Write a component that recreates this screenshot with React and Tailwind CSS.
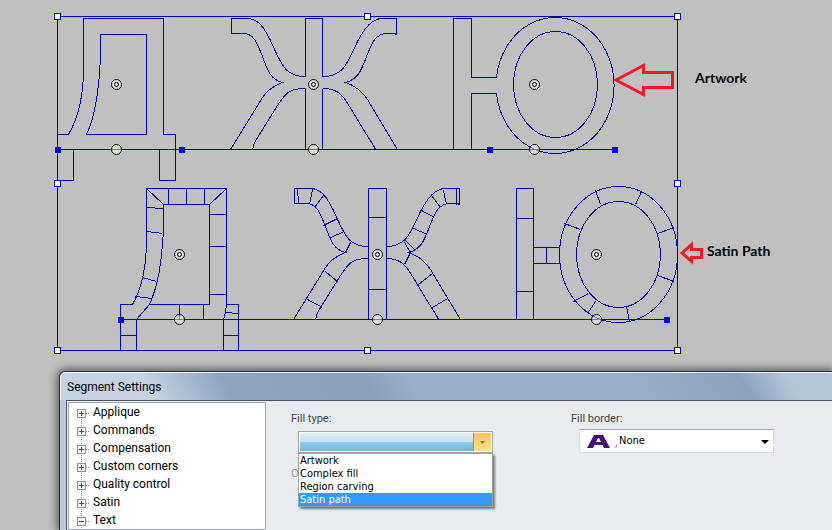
import { useState } from 'react';

const ARMS = [
  'M305 76C284 76 281 64 270 40C264 28 258 18 247 18H231V33H243C254 33 257 44 262 56C267 70 270 79 282 82C274 85 267 89 262 97L230 149',
  'M305 88C290 88 286 91 277 105L254 142L252 149',
  'M322 76C343 76 346 64 357 41C364 28 371 18 382 18H396V34L394 33H387C374 33 371 44 366 56C361 70 357 79 345 82C354 85 361 90 367 99L397 149',
  'M322 88C335 88 341 92 349 106L366 134L373 145L375 149',
];

const ARTWORK = [
  'M57 134H68C79 115 83 90 83 68V18H163V134H175V180H159V149M57 180H73V149',
  'M85 134H146V34H100V54C99 85 96 113 86 134',
  'M305 76V18H322V76M305 88V149M322 88V149',
  'M453 149V18H471V77H496A59 68 0 1 1 496 93H471V149',
  'M513 84A42 53 0 1 1 597 84A42 53 0 1 1 513 84Z',
];

const SATIN = [
  'M120 350V304H132C143 285 146 262 146 238V188H226V304H238V350M223 350V319L225 312L226 304',
  'M136 350V319L149 304H209V204H163V230C161 262 158 284 149 304',
  'M168 188V204M186 188V204M204 188V204M146 188L163 204M226 188L209 204',
  'M146 207L163 208M146 231L162 233M142 277L156 281M135 296L151 298',
  'M209 214H226M209 246H226M209 294H226M179 304V319M203 304V319M120 335H136M223 335H238M225 312L238 313',
  'M368 188H386V319H368ZM368 217H386M368 289H386',
  'M297 188L298 203M312 189L309 204M323 195L314 207M337 218L323 225M344 231L330 237M350 242L345 252M325 271L338 282M307 299L322 307',
  'M456 188V204M443 190L446 204M431 195L440 207M421 210L434 217M413 228L427 234M405 240L415 250M404 242L410 252L404 264M432 273L418 284M447 298L432 307',
  'M516 319V188H533V319M516 218H533M516 291H533M533 247H559M533 263H559M546 247V263',
  'M559 254A59 68 0 1 1 677 254A59 68 0 1 1 559 254Z',
  'M576 254A42 53 0 1 1 660 254A42 53 0 1 1 576 254Z',
  'M595 190L600 204M641 191L635 204M564 223L580 229M674 227L657 233M657 275L674 281M573 301L588 293M587 313L595 301M626 306L629 321',
];

const FRAME_HANDLES = [[57, 16], [367, 16], [677, 16], [57, 183], [677, 183], [57, 350], [367, 350], [677, 350]];
const BASE_HANDLES = [[55, 147], [179, 147], [487, 147], [612, 147], [118, 317], [664, 317]];
const CENTERS = [[116, 84], [313, 84], [534, 84], [179, 254], [377, 254], [596, 254]];

const TREE = ['Applique', 'Commands', 'Compensation', 'Custom corners', 'Quality control', 'Satin', 'Text'];
const FILLS = ['Artwork', 'Complex fill', 'Region carving', 'Satin path'];

function Canvas() {
  return (
    <section className="relative overflow-hidden pb-[11px]" aria-label="Design canvas">
      <svg width="710" height="360" viewBox="0 0 710 360" className="block max-w-none" role="img" aria-label="Lettering outlines">
        <g transform="translate(.5 .5)" fill="none" stroke="#0000b4" shapeRendering="crispEdges">
          <rect x="57" y="16" width="620" height="334" />
          <path d="M57 149H614M120 319H667" />
          {ARTWORK.map((d) => <path key={d} d={d} />)}
          {SATIN.map((d) => <path key={d} d={d} />)}
          {ARMS.map((d) => <path key={d} d={d} />)}
          <g transform="translate(63 170)">
            {ARMS.map((d) => <path key={d} d={d} />)}
          </g>
          {FRAME_HANDLES.map(([x, y]) => <rect key={`${x}-${y}`} x={x - 3} y={y - 3} width="6" height="6" fill="#fff" />)}
        </g>
        {BASE_HANDLES.map(([x, y]) => <rect key={`${x}-${y}`} x={x} y={y} width="6" height="6" fill="#0000ff" />)}
        <g transform="translate(.5 .5)" fill="#fff" fillOpacity=".45" stroke="#000">
          {CENTERS.map(([x, y]) => (
            <g key={`${x}-${y}`}>
              <circle cx={x} cy={y} r="5" />
              <circle cx={x} cy={y} r="2" />
              <circle cx={x} cy={y + 65} r="5" />
            </g>
          ))}
        </g>
        <g fill="none" stroke="#ed1c24" strokeWidth="3">
          <path d="M616 80L643.5 65.500V72.500H672.500V87.500H643.500V94.500Z" />
          <path d="M682 253L691.500 244.500V249.500H701.500V257.500H691.500V261.500Z" />
        </g>
      </svg>
      <p className="absolute left-[695px] top-[70px] text-[14px] leading-4 font-bold font-['Lato',sans-serif]">Artwork</p>
      <p className="absolute left-[707px] top-[243px] text-[14px] leading-4 font-bold font-['Lato',sans-serif]">Satin Path</p>
    </section>
  );
}

function Tree() {
  return (
    <ul className="w-[198px] shrink-0 border border-[#a0a6b2] bg-white pl-2 font-['Roboto',sans-serif] text-[12px] leading-[18px]">
      {TREE.map((name) => (
        <li key={name} className="flex h-[18px] items-center">
          <button className="flex items-center text-black">
            <svg width="16" height="18" viewBox="0 0 16 18" className="shrink-0" shapeRendering="crispEdges" aria-hidden="true">
              <path d={name === 'Applique' ? 'M4.500 10V18' : 'M4.500 0V18'} stroke="#888" strokeDasharray="1 1" />
              <path d="M9 10.500H13" stroke="#888" strokeDasharray="1 1" />
              <rect x=".5" y="6.500" width="8" height="8" fill="#f4f4f4" stroke="#919191" />
              <path d={name === 'Text' ? 'M2 10.500H7' : 'M2 10.500H7M4.500 8V13'} stroke="#2b4ba0" />
            </svg>
            {name}
          </button>
        </li>
      ))}
    </ul>
  );
}

function FillType() {
  const [fill, setFill] = useState('Satin path');

  return (
    <div className="w-[280px] shrink-0">
      <label htmlFor="fill-type" className="block font-['Roboto',sans-serif] leading-4 text-[#444]">Fill type:</label>
      <div className="relative ml-[7px] mt-[4px] w-[195px]">
        <select id="fill-type" defaultValue="" className="block h-[22px] w-full appearance-none border border-[#a0a3a8] bg-[linear-gradient(#e2f2f8,#c2e2f0_50%,#8fcbe6_50%,#6db5da)] bg-clip-content p-px outline outline-offset-[-2px] outline-white">
          <option value=""></option>
          {FILLS.map((f) => <option key={f}>{f}</option>)}
        </select>
        <span className="pointer-events-none absolute top-[2px] right-[2px] flex h-[18px] w-[18px] items-center justify-center border-l border-[#c98a3c] bg-linear-to-b from-[#f5c463] to-[#ffe085]">
          <svg width="5" height="3" viewBox="0 0 5 3" aria-hidden="true"><path d="M0 0H5L2.500 3Z" fill="#77706a" /></svg>
        </span>
        <ul role="listbox" aria-label="Fill type" className="absolute top-full left-0 z-10 w-full border border-[#9aa0b0] bg-white text-black shadow-[2px_2px_2px_#777]">
          {FILLS.map((f) => (
            <li key={f} role="option" aria-selected={f === fill} onClick={() => setFill(f)} className={f === fill ? 'h-[13px] bg-[#3399ff] pl-px leading-[13px] text-white' : 'h-[13px] pl-px leading-[13px]'}>{f}</li>
          ))}
        </ul>
      </div>
      <p className="mt-[13px] leading-4 text-[#999]">O</p>
    </div>
  );
}

function FillBorder() {
  return (
    <div className="shrink-0">
      <label htmlFor="fill-border" className="block font-['Roboto',sans-serif] leading-4 text-[#444]">Fill border:</label>
      <div className="relative ml-2 mt-[2px] w-[195px]">
        <select id="fill-border" className="block h-6 w-full appearance-none border border-[#d8dbe2] border-t-[#a4a7b0] bg-white pt-px pl-[39px] text-black">
          <option>None</option>
        </select>
        <svg width="195" height="24" viewBox="0 0 195 24" className="pointer-events-none absolute inset-0" aria-hidden="true">
          <path d="M8 19L15 6H24L31 19H25L23.500 16H15.500L14 19ZM17 13H22L20 9H19Z" fill="#3f1078" fillRule="evenodd" />
          <path d="M35 18H38M37.500 15V18" stroke="#b9a8c8" fill="none" />
          <path d="M182 11H190L186 15Z" fill="#000" />
        </svg>
      </div>
    </div>
  );
}

export default function App() {
  return (
    <main className="flex h-screen flex-col overflow-hidden bg-[#c0c0c0] text-black">
      <Canvas />
      <section className="ml-[59px] flex grow flex-col rounded-tl-md border-t border-l border-[#2a2f38] bg-[#b9cadc] shadow-[0_0_8px_2px_#555]" aria-labelledby="dialog-title">
        <header className="flex h-[28px] items-center rounded-tl-md border-t border-l border-white/80 bg-[linear-gradient(60deg,#c3d2e2_0%,#c6d3e1_12%,#8ca5c1_22%,#8aa2be_40%,#96afc9_46%,#96afc9_72%,#8ca3c0_88%,#b5c6d8_94%,#b5c6d8_100%)] pl-[6px]">
          <h1 id="dialog-title" className="font-['Roboto',sans-serif] text-[12px] leading-4">Segment Settings</h1>
        </header>
        <div className="ml-[6px] flex grow border-t border-l border-[#4a5363] bg-[#e8ebf0] pt-px pl-px">
          <Tree />
          <div className="flex grow pt-[9px] pl-[25px] font-['DejaVu_Sans_Condensed','DejaVu_Sans',sans-serif] text-[11px]">
            <FillType />
            <FillBorder />
          </div>
        </div>
      </section>
    </main>
  );
}
